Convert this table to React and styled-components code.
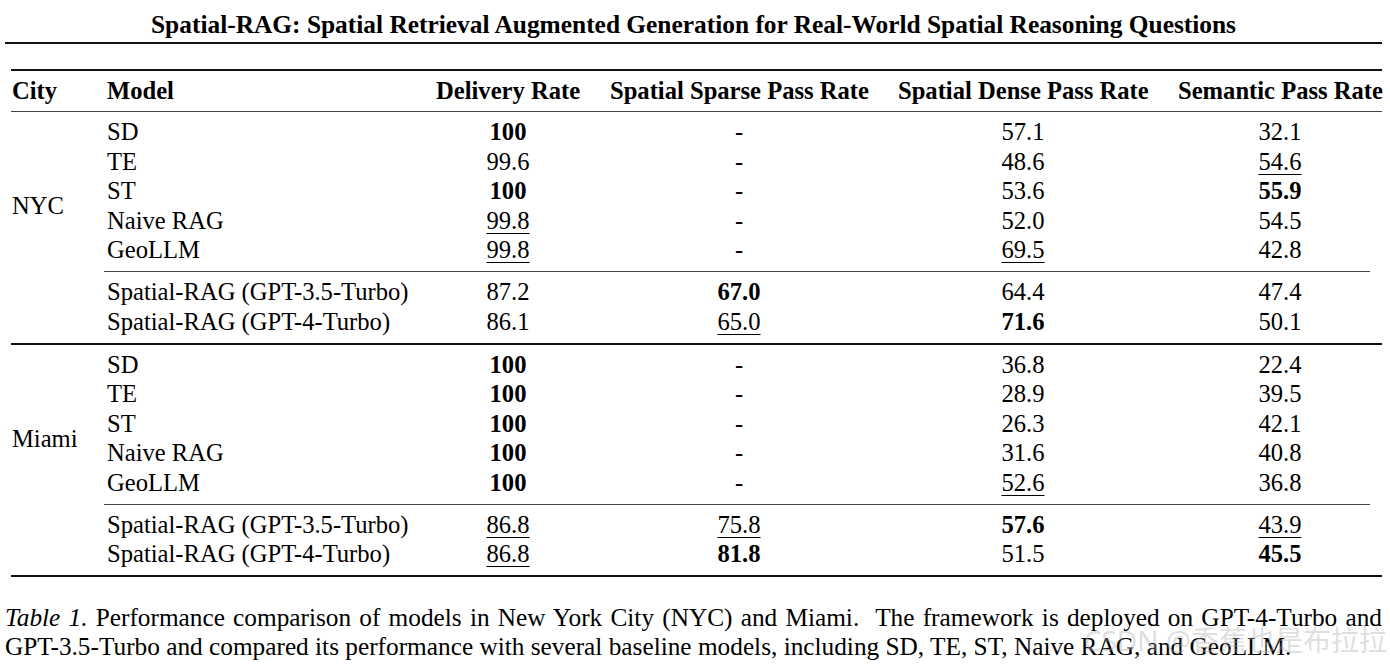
import React from "react";
import styled, { createGlobalStyle } from "styled-components";

const GlobalStyle = createGlobalStyle`
  html, body {
    margin: 0;
    padding: 0;
    background: #fff;
  }
  body {
    font-family: "Liberation Serif", "Times New Roman", serif;
    color: #000;
  }
`;

const Page = styled.div`
  width: 1377px;
  padding: 10px 8px 0 5px;
`;

const Title = styled.h1`
  margin: 0;
  font-size: 25.4px;
  line-height: 29px;
  font-weight: bold;
  text-align: center;
`;

const TitleRule = styled.div`
  height: 2px;
  margin-top: 3px;
  background: #111;
`;

const Table = styled.table`
  margin: 25px 0 0 6px;
  width: 1371px;
  table-layout: fixed;
  border-collapse: separate;
  border-spacing: 0;
  font-size: 24.6px;
`;

const Cell = styled.td`
  padding: ${({ $top, $bottom }) => `${$top || 0}px 15px ${$bottom || 0}px`};
  line-height: 29.5px;
  white-space: nowrap;
  text-align: ${({ $align }) => $align || "center"};
  vertical-align: middle;
  &:last-child {
    padding-right: 0;
  }
`;

const HeadCell = styled(Cell).attrs({ as: "th" })`
  font-weight: bold;
  padding-top: 5.25px;
  padding-bottom: 5.25px;
  &:first-child {
    padding-left: 1px;
  }
`;

const CityCell = styled.td`
  padding: 29px 0 0 1px;
  line-height: 29.5px;
  vertical-align: middle;
  text-align: left;
`;

const RuleCell = styled.td`
  padding: 0;
  line-height: 0;
  font-size: 0;
`;

const Rule = styled.div`
  height: ${({ $weight }) => $weight}px;
  background: ${({ $weight }) => ($weight > 1 ? "#111" : "#444")};
  margin: ${({ $trim }) => ($trim ? "0 12px" : "0")};
`;

const Bold = styled.b`
  font-weight: bold;
`;

const Under = styled.span`
  text-decoration: underline;
  text-decoration-thickness: 1px;
  text-underline-offset: 4px;
`;

const Caption = styled.div`
  position: relative;
  margin-top: 26px;
  font-size: 25.3px;
  line-height: 29px;
`;

const CaptionLine = styled.div`
  text-align: ${({ $justify }) => ($justify ? "justify" : "left")};
  text-align-last: ${({ $justify }) => ($justify ? "justify" : "auto")};
  white-space: nowrap;
`;

const Watermark = styled.span`
  position: absolute;
  right: -5px;
  top: 20px;
  font-family: "Noto Sans", "Noto Sans CJK SC", sans-serif;
  font-size: 28px;
  line-height: 34px;
  color: rgba(170, 170, 170, 0.4);
  pointer-events: none;
`;

const cols = [81, 329, 174, 288, 280, 219];
const headers = [
  "City",
  "Model",
  "Delivery Rate",
  "Spatial Sparse Pass Rate",
  "Spatial Dense Pass Rate",
  "Semantic Pass Rate",
];

const cities = [
  {
    name: "NYC",
    baselines: [
      ["SD", "*100", "-", "57.1", "32.1"],
      ["TE", "99.6", "-", "48.6", "_54.6"],
      ["ST", "*100", "-", "53.6", "*55.9"],
      ["Naive RAG", "_99.8", "-", "52.0", "54.5"],
      ["GeoLLM", "_99.8", "-", "_69.5", "42.8"],
    ],
    ours: [
      ["Spatial-RAG (GPT-3.5-Turbo)", "87.2", "*67.0", "64.4", "47.4"],
      ["Spatial-RAG (GPT-4-Turbo)", "86.1", "_65.0", "*71.6", "50.1"],
    ],
  },
  {
    name: "Miami",
    baselines: [
      ["SD", "*100", "-", "36.8", "22.4"],
      ["TE", "*100", "-", "28.9", "39.5"],
      ["ST", "*100", "-", "26.3", "42.1"],
      ["Naive RAG", "*100", "-", "31.6", "40.8"],
      ["GeoLLM", "*100", "-", "_52.6", "36.8"],
    ],
    ours: [
      ["Spatial-RAG (GPT-3.5-Turbo)", "_86.8", "_75.8", "*57.6", "_43.9"],
      ["Spatial-RAG (GPT-4-Turbo)", "_86.8", "*81.8", "51.5", "*45.5"],
    ],
  },
];

// "*" marks best (bold), "_" marks second best (underline)
const Value = ({ v }) => {
  if (v.startsWith("*")) return <Bold>{v.slice(1)}</Bold>;
  if (v.startsWith("_")) return <Under>{v.slice(1)}</Under>;
  return v;
};

const FullRule = ({ weight }) => (
  <tr>
    <RuleCell colSpan={6}>
      <Rule $weight={weight} />
    </RuleCell>
  </tr>
);

const TrimRule = () => (
  <tr>
    <RuleCell />
    <RuleCell colSpan={5}>
      <Rule $weight={1} $trim />
    </RuleCell>
  </tr>
);

const DataRows = ({ rows, city }) =>
  rows.map((row, i) => {
    const top = i === 0 ? 5 : 0;
    const bottom = i === rows.length - 1 ? 6.5 : 0;
    return (
      <tr key={row[0]}>
        {i === 0 && <CityCell rowSpan={rows.length}>{city}</CityCell>}
        {row.map((v, j) => (
          <Cell key={j} $align={j === 0 ? "left" : "center"} $top={top} $bottom={bottom}>
            <Value v={v} />
          </Cell>
        ))}
      </tr>
    );
  });

export default function App() {
  return (
    <>
      <GlobalStyle />
      <Page>
        <Title>
          Spatial-RAG: Spatial Retrieval Augmented Generation for Real-World Spatial Reasoning Questions
        </Title>
        <TitleRule />
        <Table>
          <colgroup>
            {cols.map((w, i) => (
              <col key={i} style={{ width: w }} />
            ))}
          </colgroup>
          <thead>
            <FullRule weight={2} />
            <tr>
              {headers.map((h, i) => (
                <HeadCell key={h} $align={i < 2 ? "left" : "center"}>
                  {h}
                </HeadCell>
              ))}
            </tr>
            <FullRule weight={1} />
          </thead>
          {cities.map((c, ci) => (
            <tbody key={c.name}>
              {ci > 0 && <FullRule weight={2} />}
              <DataRows rows={c.baselines} city={c.name} />
              <TrimRule />
              <DataRows rows={c.ours} />
            </tbody>
          ))}
          <tbody>
            <FullRule weight={2} />
          </tbody>
        </Table>
        <Caption>
          <CaptionLine $justify>
            <i>Table 1.</i> Performance comparison of models in New York City (NYC) and Miami.&nbsp; The framework is deployed on GPT-4-Turbo and
          </CaptionLine>
          <CaptionLine>
            GPT-3.5-Turbo and compared its performance with several baseline models, including SD, TE, ST, Naive RAG, and GeoLLM.
          </CaptionLine>
          <Watermark>CSDN @香蕉也是布拉拉</Watermark>
        </Caption>
      </Page>
    </>
  );
}
